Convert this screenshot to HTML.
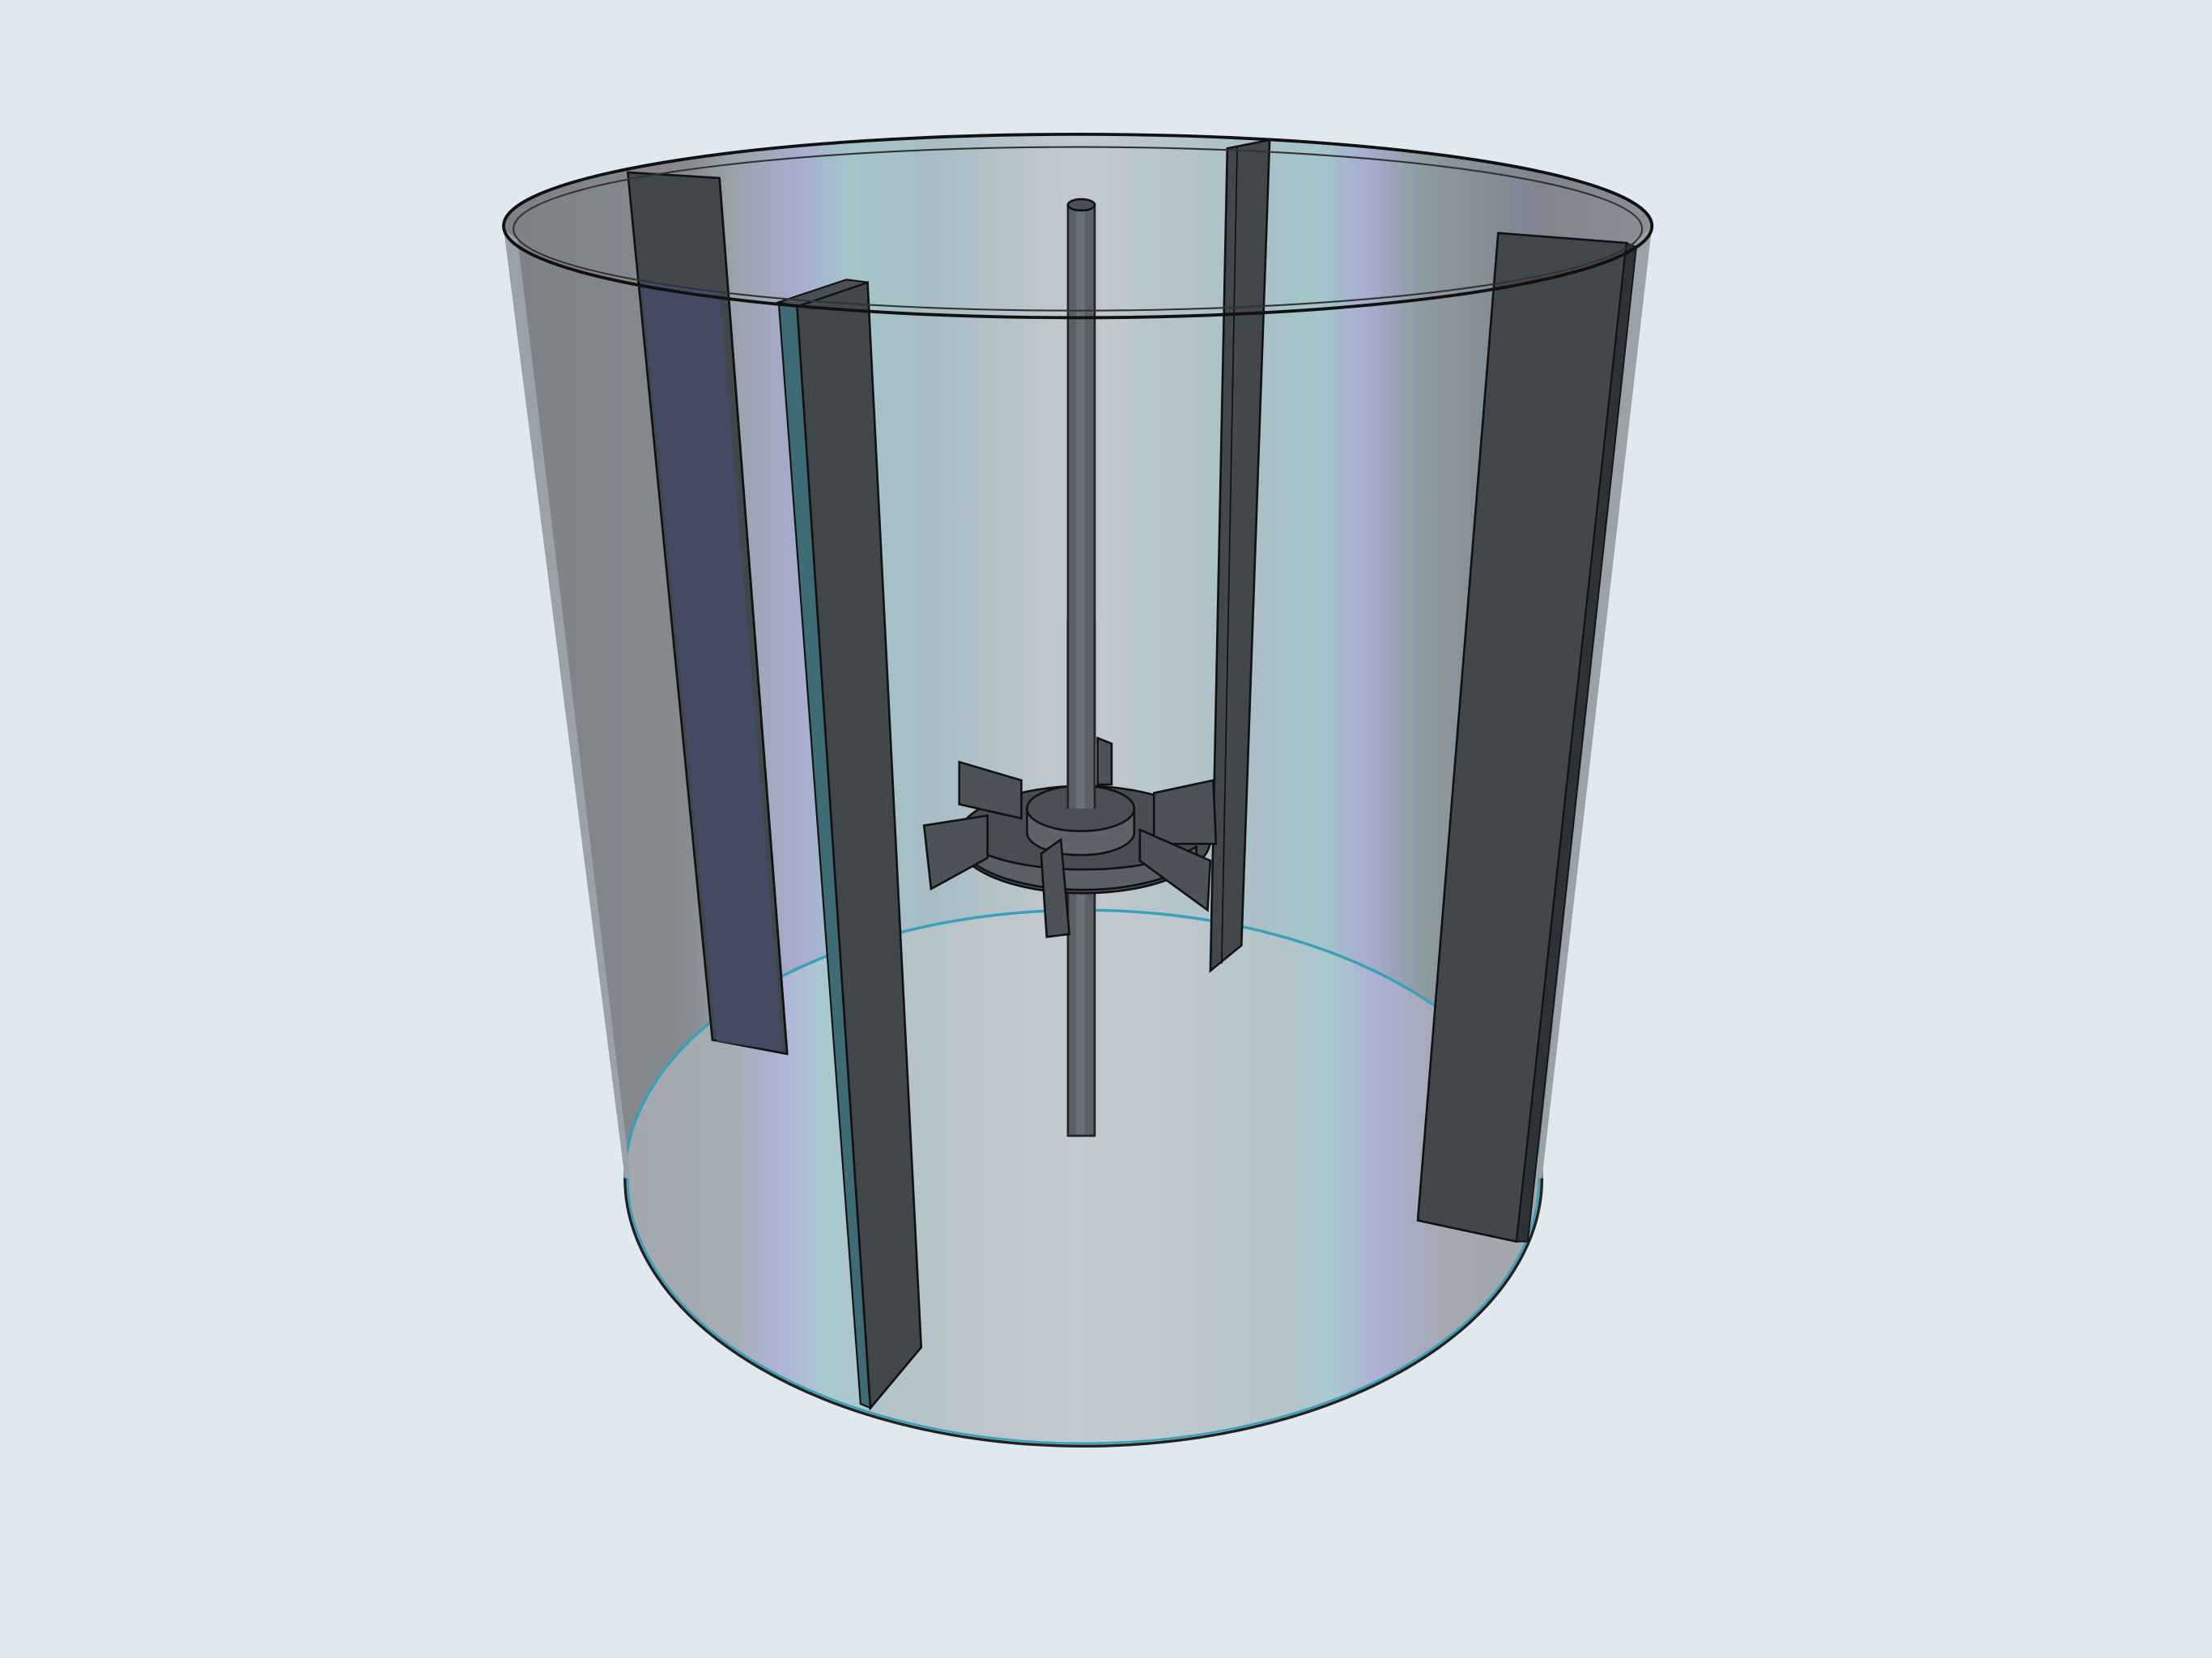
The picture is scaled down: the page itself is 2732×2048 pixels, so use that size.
<!DOCTYPE html>
<html><head><style>html,body{margin:0;padding:0;background:#e1e9f0;}svg{display:block}</style></head>
<body>
<svg width="2732" height="2048" viewBox="0 0 1568 1175" xmlns="http://www.w3.org/2000/svg">
<defs>
<linearGradient id="body" x1="357" y1="0" x2="1171" y2="0" gradientUnits="userSpaceOnUse">
<stop offset="0" stop-color="#7d8186"/>
<stop offset="0.16" stop-color="#868a8f"/>
<stop offset="0.2" stop-color="#9aa3ab"/>
<stop offset="0.26" stop-color="#a8adcf"/>
<stop offset="0.3" stop-color="#a4c4cb"/>
<stop offset="0.37" stop-color="#a7bcc4"/>
<stop offset="0.5" stop-color="#c2c9d0"/>
<stop offset="0.66" stop-color="#a9c0c6"/>
<stop offset="0.71" stop-color="#a3c5cb"/>
<stop offset="0.75" stop-color="#a8aed0"/>
<stop offset="0.8" stop-color="#8d9aa0"/>
<stop offset="0.9" stop-color="#7f8490"/>
<stop offset="1" stop-color="#8a8f95"/>
</linearGradient>
<linearGradient id="front" x1="357" y1="0" x2="1171" y2="0" gradientUnits="userSpaceOnUse">
<stop offset="0" stop-color="#9ea3a8"/>
<stop offset="0.2" stop-color="#a6acb4"/>
<stop offset="0.24" stop-color="#b0b3d6"/>
<stop offset="0.28" stop-color="#a9c9cf"/>
<stop offset="0.35" stop-color="#b5c2c9"/>
<stop offset="0.5" stop-color="#c3cad1"/>
<stop offset="0.68" stop-color="#b5c4ca"/>
<stop offset="0.72" stop-color="#a9c9cf"/>
<stop offset="0.76" stop-color="#adb0d4"/>
<stop offset="0.82" stop-color="#a4a9b0"/>
<stop offset="1" stop-color="#a0a5ab"/>
</linearGradient>
</defs>
<rect width="1568" height="1175" fill="#e1e9f0"/>
<!-- cylinder body including top interior -->
<path d="M357,160 A407,65 0 0 1 1171,160 L1093,835 A325,190 0 0 1 443,835 Z" fill="url(#body)"/>
<!-- floor region -->
<path d="M443,835 A325,190 0 0 1 1093,835 A325,190 0 0 1 443,835 Z" fill="url(#front)"/>
<path d="M443,835 A325,190 0 0 1 1093,835" fill="none" stroke="#3aa0b8" stroke-width="2"/>
<path d="M443,835 A325,190 0 0 0 1093,835" fill="none" stroke="#222" stroke-width="2"/>
<path d="M445,835 A323,188 0 0 0 1091,835" fill="none" stroke="#3aa0b8" stroke-width="1.5"/>
<!-- baffle 3 (back right) -->
<polygon points="870,105 900,99 880,670 858,688" fill="#42474c" stroke="#111" stroke-width="1.5"/>
<line x1="877" y1="104" x2="866" y2="683" stroke="#111" stroke-width="1"/>
<!-- shaft -->
<rect x="757" y="145" width="19" height="660" fill="#5a6066" stroke="#222" stroke-width="1.5"/>
<rect x="763" y="146" width="6" height="658" fill="#6a7077"/>
<ellipse cx="766.5" cy="145" rx="9.5" ry="4" fill="#4a4f55" stroke="#111" stroke-width="1.5"/>
<!-- impeller -->
<ellipse cx="768" cy="595" rx="90" ry="38" fill="#484d53" stroke="#111" stroke-width="1.5"/>
<path d="M688,610 A90,38 0 0 0 848,610 L848,600 A90,30 0 0 1 688,600 Z" fill="#5a6066" stroke="#111" stroke-width="1.5"/>
<path d="M728,573 L728,590 A38,16 0 0 0 804,590 L804,573" fill="#5d6369" stroke="#111" stroke-width="1.5"/>
<ellipse cx="766" cy="573" rx="38" ry="16" fill="#4a4f55" stroke="#111" stroke-width="1.5"/>
<path d="M757,440 L757,573 M776,440 L776,573" stroke="#222" stroke-width="1.5"/>
<rect x="757.8" y="440" width="17.4" height="133" fill="#5a6066"/>
<rect x="763" y="440" width="6" height="133" fill="#6a7077"/>
<!-- blades -->
<polygon points="680,540 724,553 724,580 680,570" fill="#4d5258" stroke="#111" stroke-width="1.5"/>
<polygon points="655,585 700,578 700,608 660,630" fill="#4d5258" stroke="#111" stroke-width="1.5"/>
<polygon points="818,562 860,553 862,598 818,598" fill="#4d5258" stroke="#111" stroke-width="1.5"/>
<polygon points="808,588 858,610 856,645 808,610" fill="#4d5258" stroke="#111" stroke-width="1.5"/>
<polygon points="738,605 752,595 758,662 742,664" fill="#4d5258" stroke="#111" stroke-width="1.5"/>
<polygon points="778,523 788,527 788,556 778,556" fill="#4d5258" stroke="#111" stroke-width="1.5"/>
<!-- baffle 1 -->
<polygon points="445,122 510,126 558,747 505,737" fill="#42474c" stroke="#111" stroke-width="1.5"/>
<polygon points="455,200 510,205 555,745 508,738" fill="#454a66" opacity="0.9"/>
<line x1="510" y1="126" x2="558" y2="747" stroke="#111" stroke-width="1.5"/>
<!-- baffle 2 -->
<polygon points="552,214 565,217 617,998 610,995" fill="#3f6b74" stroke="#111" stroke-width="1.2"/>
<polygon points="565,217 615,200 653,955 617,998" fill="#42474c" stroke="#111" stroke-width="1.5"/>
<polygon points="552,214 600,198 615,200 565,217" fill="#4a4f55" stroke="#111" stroke-width="1.2"/>
<!-- baffle 4 -->
<polygon points="1062,165 1153,172 1075,880 1005,865" fill="#42474c" stroke="#111" stroke-width="1.5"/>
<polygon points="1153,172 1160,175 1083,880 1075,880" fill="#2e3236" stroke="#111" stroke-width="1"/>
<!-- outer edge shading -->
<path d="M357,162 L443,835 L447,835 L367,170 Z" fill="#9aa1a8"/>
<path d="M1171,160 L1093,835 L1089,835 L1161,170 Z" fill="#9aa1a8"/>
<!-- top rim -->
<ellipse cx="764" cy="160" rx="407" ry="65" fill="none" stroke="#111" stroke-width="2.2"/>
<ellipse cx="764" cy="162" rx="400" ry="58" fill="none" stroke="#333" stroke-width="1.2"/>
</svg>
</body></html>
